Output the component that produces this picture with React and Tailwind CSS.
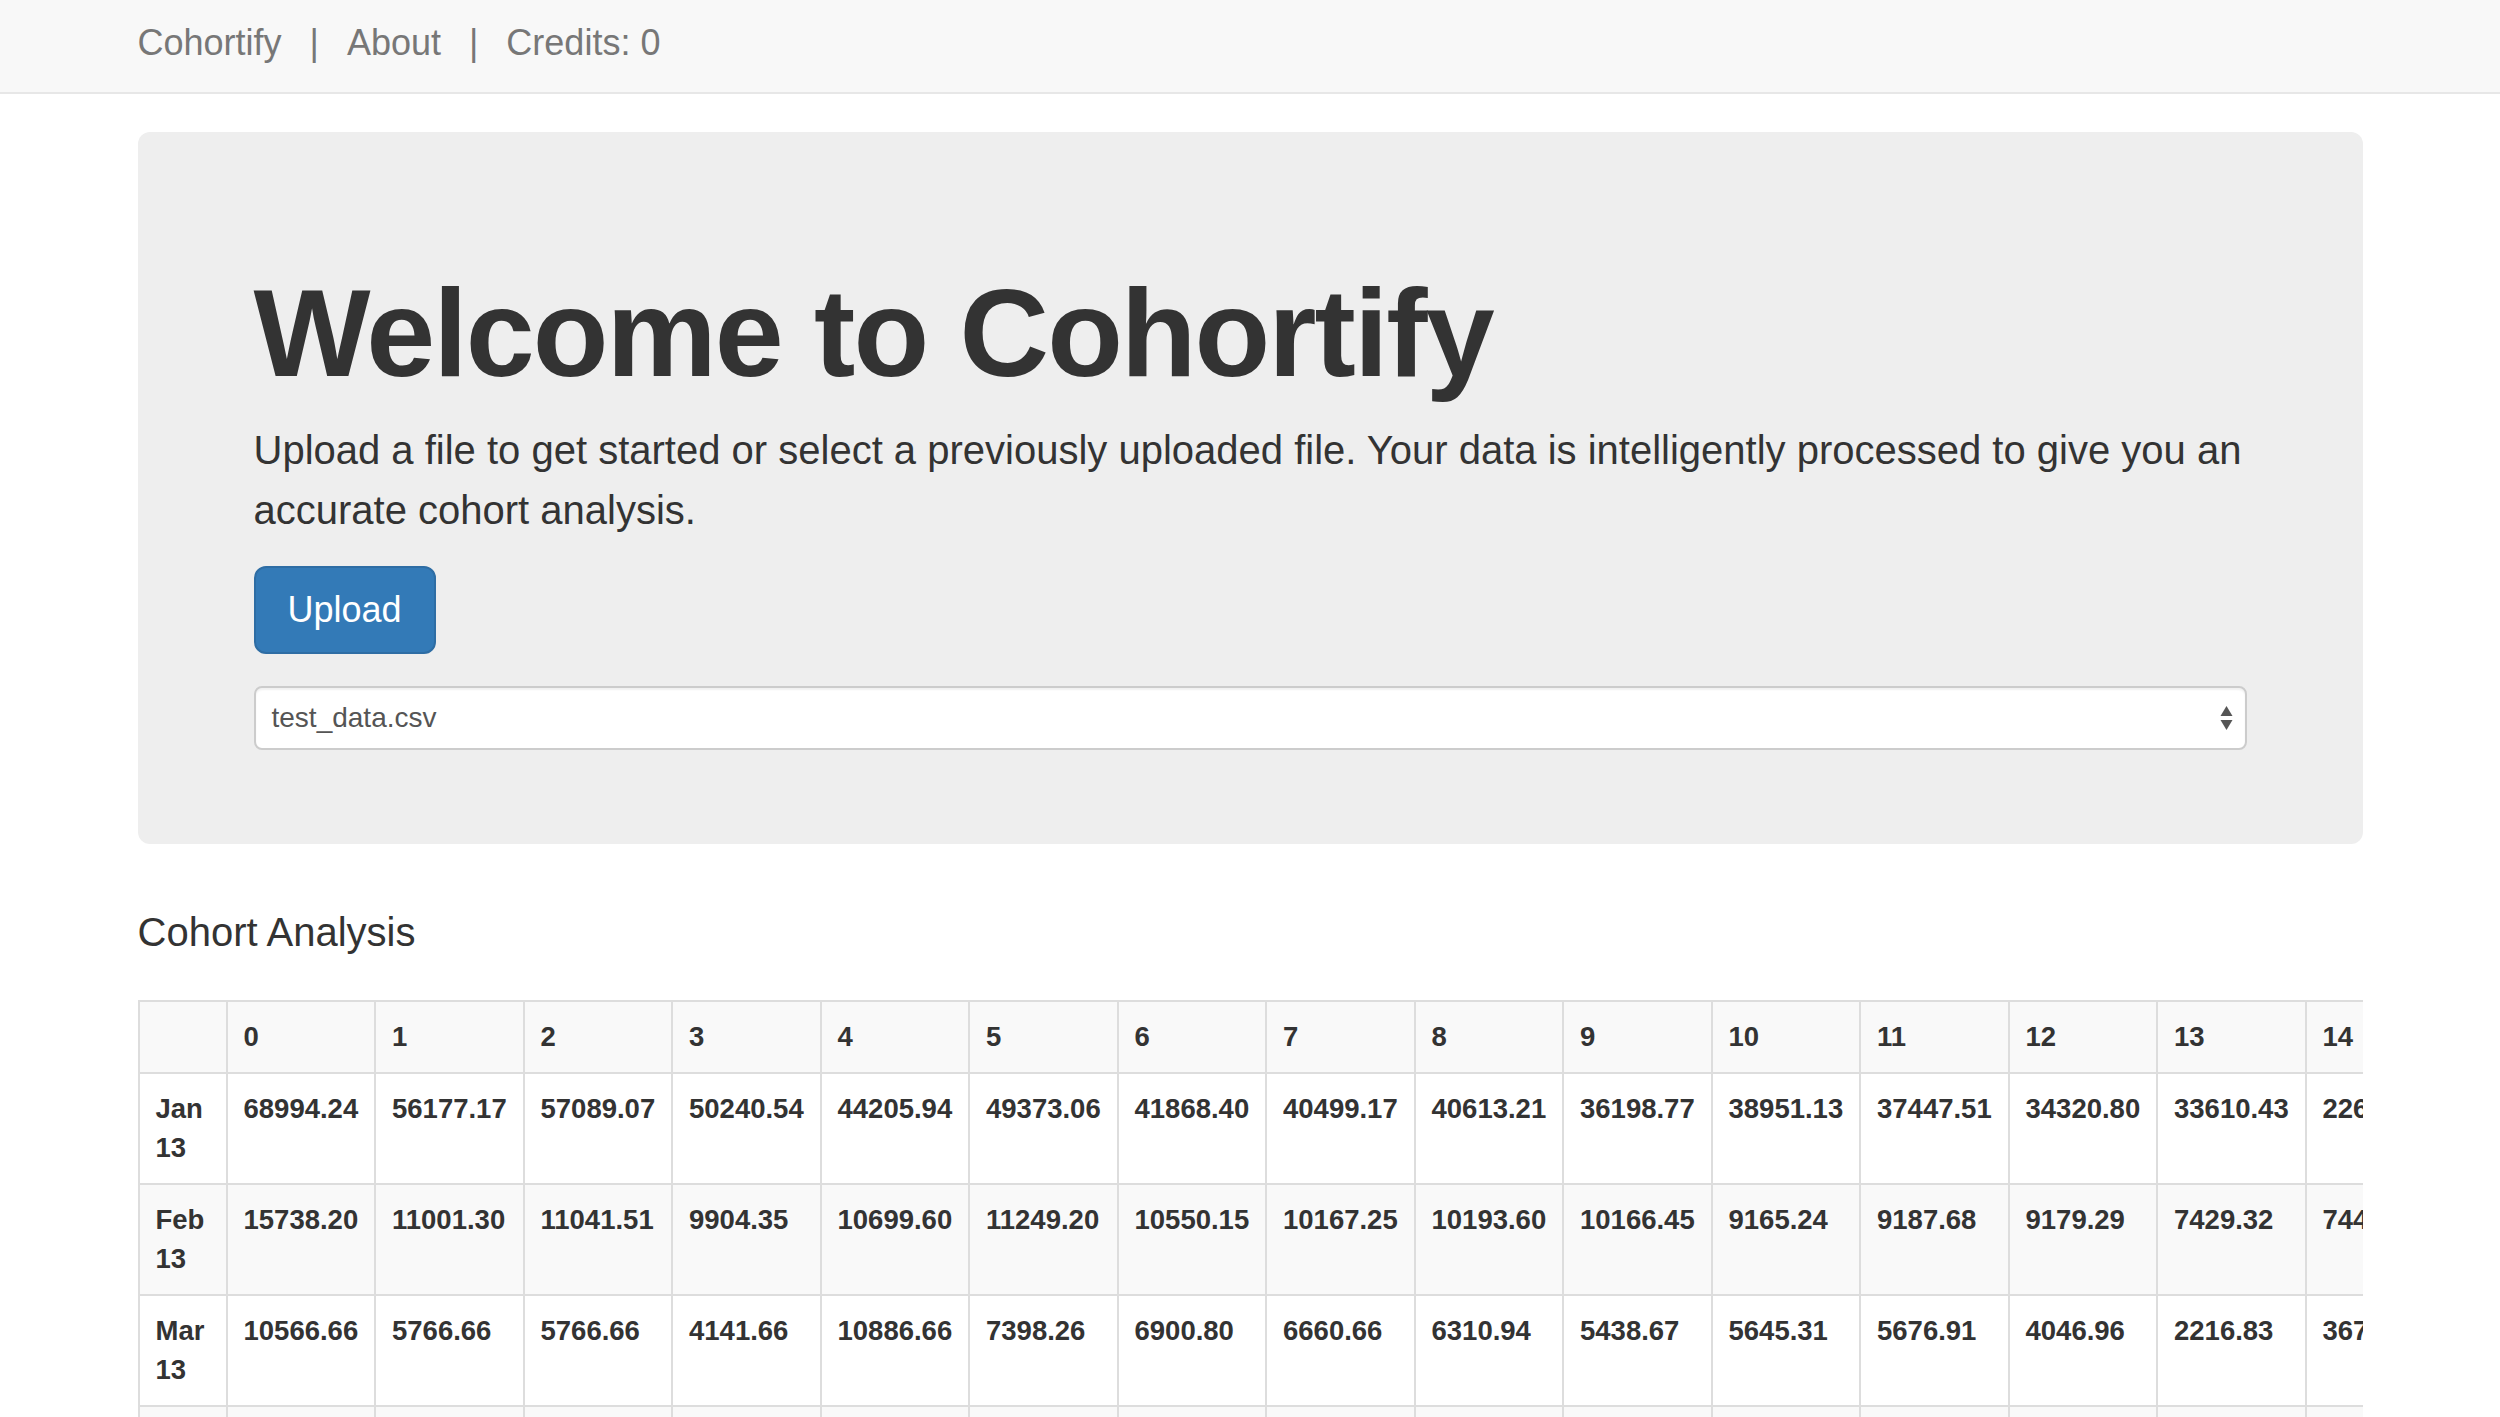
import React from "react";

const columns = Array.from({ length: 15 }, (_, i) => i);

const rows = [
  {
    label: "Jan 13",
    values: [
      "68994.24", "56177.17", "57089.07", "50240.54", "44205.94", "49373.06", "41868.40",
      "40499.17", "40613.21", "36198.77", "38951.13", "37447.51", "34320.80", "33610.43",
      "22643.18",
    ],
  },
  {
    label: "Feb 13",
    values: [
      "15738.20", "11001.30", "11041.51", "9904.35", "10699.60", "11249.20", "10550.15",
      "10167.25", "10193.60", "10166.45", "9165.24", "9187.68", "9179.29", "7429.32",
      "7441.50",
    ],
  },
  {
    label: "Mar 13",
    values: [
      "10566.66", "5766.66", "5766.66", "4141.66", "10886.66", "7398.26", "6900.80",
      "6660.66", "6310.94", "5438.67", "5645.31", "5676.91", "4046.96", "2216.83",
      "3672.41",
    ],
  },
  {
    label: "Apr 13",
    values: [
      "12877.43", "6210.50", "5893.12", "5401.77", "5120.09", "4988.61", "4702.33",
      "4511.90", "4388.04", "4201.56", "3987.21", "3850.44", "3602.18", "3311.07",
      "3104.65",
    ],
  },
];

const cell = "border-2 border-[#dddddd] px-[16px] py-[15px] leading-[39.5px] text-left align-top font-bold";

const SelectArrows = () => (
  <svg width="13" height="26" viewBox="0 0 13 26" className="shrink-0">
    <polygon points="6.5,1 12.5,11 0.5,11" fill="#555555" />
    <polygon points="0.5,15 12.5,15 6.5,25" fill="#555555" />
  </svg>
);

const App = () => {
  return (
    <div className="min-h-screen bg-white text-[#333333] font-['Liberation_Sans',Arial,sans-serif]">
      {/* Navbar */}
      <div className="bg-[#f8f8f8] border-b-2 border-[#e7e7e7]">
        <div className="w-[2225px] mx-auto h-[92px] flex items-center pb-[6px] gap-[28px] text-[36px] text-[#777777]">
          <span>Cohortify</span>
          <span>|</span>
          <span>About</span>
          <span>|</span>
          <span>Credits: 0</span>
        </div>
      </div>

      <div className="w-[2225px] mx-auto">
        {/* Jumbotron */}
        <div className="mt-[38px] bg-[#eeeeee] rounded-[12px] px-[116px] pt-[132px] pb-[94px]">
          <h1 className="m-0 text-[124px] leading-[139px] font-bold tracking-[-2px] text-[#333333]">
            Welcome to Cohortify
          </h1>
          <p className="mt-[17px] text-[40px] leading-[60px] font-light text-[#333333]">
            Upload a file to get started or select a previously uploaded file. Your data is
            intelligently processed to give you an accurate cohort analysis.
          </p>
          <button className="mt-[26px] h-[88px] px-[32px] rounded-[12px] bg-[#337ab7] border-2 border-[#2e6da4] text-white text-[36px]">
            Upload
          </button>
          <div className="mt-[32px] h-[64px] bg-white border-2 border-[#cccccc] rounded-[8px] shadow-[inset_0_2px_2px_rgba(0,0,0,0.06)] flex items-center justify-between pl-[16px] pr-[12px]">
            <span className="text-[28px] text-[#555555]">test_data.csv</span>
            <SelectArrows />
          </div>
        </div>

        {/* Cohort table */}
        <h3 className="mt-[66px] text-[40px] leading-[44px] font-normal text-[#333333]">
          Cohort Analysis
        </h3>
        <div className="mt-[46px] w-[2225px] overflow-hidden">
          <table className="table-fixed border-collapse w-[2316px] text-[27.5px] text-[#333333]">
            <thead>
              <tr className="bg-[#f9f9f9]">
                <th className={`${cell} w-[88px]`}></th>
                {columns.map((c) => (
                  <th key={c} className={`${cell} w-[148.5px]`}>
                    {c}
                  </th>
                ))}
              </tr>
            </thead>
            <tbody>
              {rows.map((row, i) => (
                <tr key={row.label} className={i % 2 === 1 ? "bg-[#f9f9f9]" : "bg-white"}>
                  <td className={cell}>{row.label}</td>
                  {row.values.map((v, j) => (
                    <td key={j} className={`${cell} whitespace-nowrap`}>
                      {v}
                    </td>
                  ))}
                </tr>
              ))}
            </tbody>
          </table>
        </div>
      </div>
    </div>
  );
};

export default App;
